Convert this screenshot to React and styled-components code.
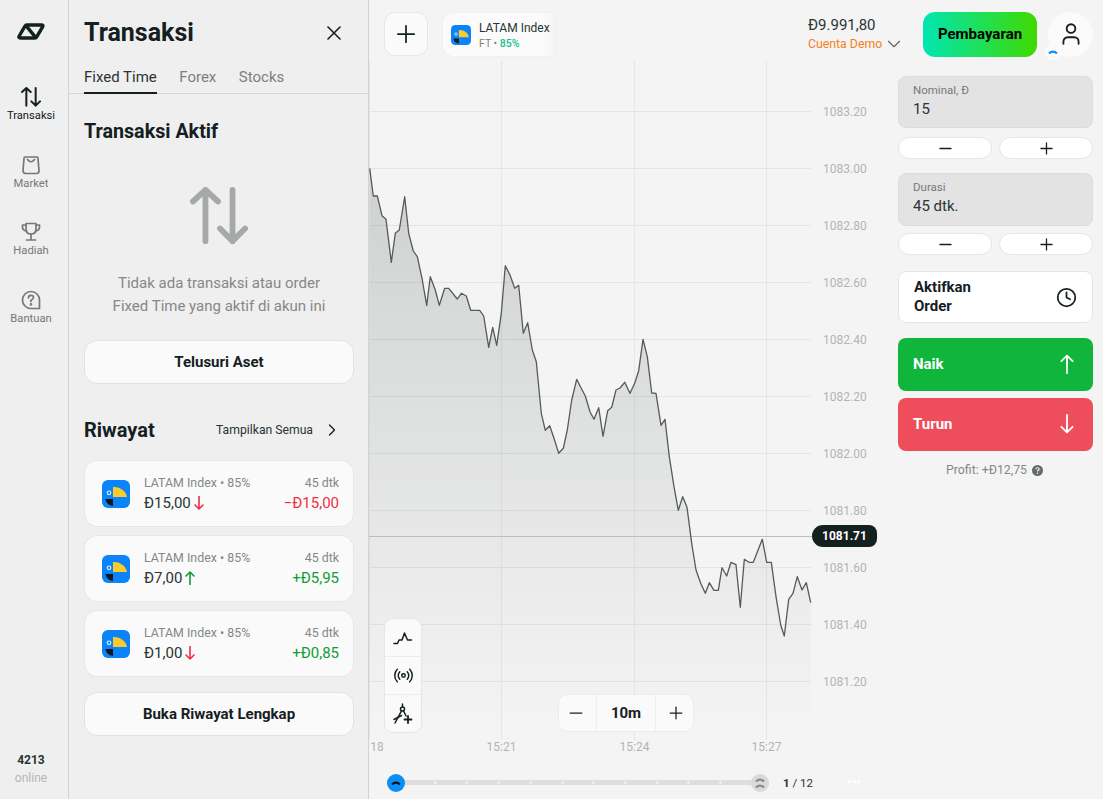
import React from "react";
import styled, { createGlobalStyle } from "styled-components";
import { ChevronDown, ChevronRight, Clock, Minus, Plus, Radio, User, X } from "lucide-react";

const INK = "#14201f";

const GlobalStyle = createGlobalStyle`
	* {
		box-sizing: border-box;
	}
	html,
	body {
		margin: 0;
		height: 100%;
		background: #f4f4f4;
		font-family: Roboto, "Liberation Sans", sans-serif;
		color: ${INK};
		overflow: hidden;
	}
`;

const Page = styled.div`
	display: flex;
	width: 1103px;
	height: 799px;
	overflow: hidden;
`;

// rail kiri
const Rail = styled.nav`
	display: flex;
	flex-direction: column;
	width: 69px;
	flex: none;
	padding-right: 6px;
	background: #efefef;
	border-right: 1px solid #d2d2d2;
`;

const LogoBox = styled.div`
	display: flex;
	justify-content: center;
	height: 86px;
	padding-top: 23px;
`;

const RailItem = styled.div`
	display: flex;
	flex-direction: column;
	align-items: center;
	height: 67.7px;
	color: ${(props) => (props.$active ? INK : "#757878")};
`;

const RailIcon = styled.div`
	display: flex;
	align-items: center;
	justify-content: center;
	height: 22px;
`;

const RailLabel = styled.span`
	margin-top: 1px;
	font-size: 11.2px;
	line-height: 13px;
`;

const RailFooter = styled.div`
	display: flex;
	flex-direction: column;
	align-items: center;
	margin-top: auto;
	padding-bottom: 12px;
`;

const OnlineCount = styled.span`
	font-size: 12px;
	font-weight: 700;
	line-height: 18px;
	color: #2a3434;
`;

const OnlineLabel = styled.span`
	font-size: 12px;
	line-height: 18px;
	color: #b4b6b6;
`;

// panel transaksi
const Panel = styled.aside`
	width: 300px;
	flex: none;
	background: #efefef;
	border-right: 1px solid #d2d2d2;
`;

const PanelHeader = styled.header`
	display: flex;
	align-items: center;
	justify-content: space-between;
	height: 62px;
	padding: 3px 22px 0 15px;
`;

const PanelTitle = styled.h1`
	margin: 0;
	font-size: 25px;
	font-weight: 700;
	line-height: 32px;
`;

const Tabs = styled.div`
	display: flex;
	gap: 22.5px;
	height: 32px;
	padding: 0 15px;
	border-bottom: 1px solid #d5d6d6;
`;

const Tab = styled.div`
	height: 32px;
	font-size: 15px;
	line-height: 30px;
	color: ${(props) => (props.$active ? "#2a3434" : "#7c7f7f")};
	border-bottom: 2px solid ${(props) => (props.$active ? INK : "transparent")};
`;

const PanelBody = styled.div`
	display: flex;
	flex-direction: column;
	padding: 0 14px 0 15px;
`;

const SectionTitle = styled.h2`
	margin: 26px 0 0;
	font-size: 19.7px;
	font-weight: 700;
	line-height: 24px;
`;

const EmptyIcon = styled.div`
	display: flex;
	justify-content: center;
	margin-top: 43px;
	color: #a6a9a9;
`;

const EmptyText = styled.p`
	margin: 27px 0 0;
	font-size: 15px;
	line-height: 23px;
	text-align: center;
	color: #858888;
`;

const WideButton = styled.button`
	height: 44px;
	margin-top: ${(props) => props.$top}px;
	padding: 0;
	border: 1px solid #e3e3e3;
	border-radius: 13px;
	background: #fafafa;
	font-family: inherit;
	font-size: 15px;
	font-weight: 700;
	color: ${INK};
`;

const HistoryHead = styled.div`
	display: flex;
	align-items: center;
	justify-content: space-between;
	height: 30px;
	margin-top: 31px;
`;

const HistoryTitle = styled.h2`
	margin: 0;
	font-size: 20px;
	font-weight: 700;
`;

const ShowAll = styled.div`
	display: flex;
	align-items: center;
	gap: 9px;
	padding-right: 12px;
	font-size: 12.2px;
	color: #2a3434;
`;

const HistoryList = styled.div`
	display: flex;
	flex-direction: column;
	gap: 8px;
	margin-top: 15px;
`;

const HistoryCard = styled.div`
	display: flex;
	align-items: center;
	height: 67px;
	padding: 0 14px 0 17px;
	border: 1px solid #e6e6e6;
	border-radius: 13px;
	background: #fafafa;
`;

const CardInfo = styled.div`
	display: flex;
	flex-direction: column;
	flex: 1;
	gap: 1px;
	margin-left: 14px;
`;

const CardRow = styled.div`
	display: flex;
	align-items: center;
	justify-content: space-between;
`;

const CardMuted = styled.span`
	font-size: 12.4px;
	line-height: 18px;
	color: #858888;
`;

const CardAmount = styled.span`
	display: flex;
	align-items: center;
	gap: 3px;
	font-size: 15px;
	line-height: 20px;
	color: #2a3434;
`;

const CardResult = styled.span`
	font-size: 15px;
	line-height: 20px;
	color: ${(props) => (props.$win ? "#0f9d34" : "#ee2f45")};
`;

// area utama
const Main = styled.main`
	display: flex;
	flex-direction: column;
	flex: 1;
	min-width: 0;
`;

const TopBar = styled.header`
	display: flex;
	align-items: center;
	height: 61px;
	padding: 7px 10px 0 15px;
	flex: none;
`;

const AddButton = styled.div`
	display: flex;
	align-items: center;
	justify-content: center;
	width: 44px;
	height: 44px;
	border: 1px solid #e6e6e6;
	border-radius: 11px;
	background: #fafafa;
`;

const AssetTab = styled.div`
	display: flex;
	align-items: center;
	gap: 8px;
	width: 112px;
	height: 43px;
	margin-left: 15px;
	padding: 2px 0 0 8px;
	border-radius: 10px 0 0 10px;
	overflow: hidden;
	white-space: nowrap;
	background: linear-gradient(90deg, #fbfbfb 88%, #f4f4f4 100%);
	box-shadow: 0 0 2px #e8e8e8;
`;

const AssetText = styled.div`
	display: flex;
	flex-direction: column;
`;

const AssetName = styled.span`
	font-size: 12px;
	line-height: 17px;
	color: #2a3434;
`;

const AssetMeta = styled.span`
	font-size: 10.5px;
	line-height: 14px;
	color: #7c7f7f;

	b {
		font-weight: 500;
		color: #17bf8d;
	}
`;

const Balance = styled.div`
	display: flex;
	flex-direction: column;
	width: 115px;
	margin-left: auto;
`;

const BalanceValue = styled.span`
	font-size: 15px;
	line-height: 19px;
	color: #2a3434;
`;

const AccountRow = styled.span`
	display: flex;
	align-items: center;
	gap: 1px;
	height: 17px;
	margin-top: 1px;
	font-size: 12.3px;
	line-height: 17px;
	color: #f4801c;

	svg {
		color: #5c6363;
	}
`;

const PayButton = styled.button`
	width: 114px;
	height: 45px;
	padding: 0;
	border: 0;
	border-radius: 12px;
	background: linear-gradient(90deg, #00e6b2, #3fd900);
	font-family: inherit;
	font-size: 15px;
	font-weight: 700;
	color: #000;
`;

const Avatar = styled.div`
	position: relative;
	display: flex;
	align-items: center;
	justify-content: center;
	width: 45px;
	height: 45px;
	margin-left: 11px;
	border-radius: 50%;
	background: #fbfbfb;
`;

const AvatarBadge = styled.div`
	position: absolute;
	left: -3px;
	bottom: -3px;
	display: flex;
	align-items: center;
	justify-content: center;
	width: 16px;
	height: 16px;
	border-radius: 50%;
	background: #fbfbfb;
`;

const Content = styled.div`
	display: flex;
	flex: 1;
	min-height: 0;
`;

const ChartColumn = styled.section`
	position: relative;
	display: flex;
	flex-direction: column;
	width: 529px;
	flex: none;
`;

const ChartSvg = styled.svg`
	display: block;
	flex: none;
`;

const AxisText = styled.text`
	font-family: Roboto, "Liberation Sans", sans-serif;
	font-size: 12px;
	fill: #b2b4b4;
`;

const PriceTag = styled.div`
	position: absolute;
	top: 464px;
	left: 443px;
	width: 65px;
	height: 22px;
	border-radius: 11px 8px 8px 11px;
	background: ${INK};
	font-size: 12px;
	font-weight: 700;
	line-height: 22px;
	text-align: center;
	color: #fff;
`;

const ToolStack = styled.div`
	position: absolute;
	top: 557px;
	left: 15px;
	display: flex;
	flex-direction: column;
	width: 38px;
	height: 115px;
	border: 1px solid #e6e6e6;
	border-radius: 9px;
	background: #fafafa;
`;

const ToolCell = styled.div`
	display: flex;
	align-items: center;
	justify-content: center;
	flex: 1;

	& + & {
		border-top: 1px solid #ececec;
	}
`;

const ZoomControl = styled.div`
	position: absolute;
	top: 633px;
	left: 189px;
	display: flex;
	width: 136px;
	height: 38px;
	border: 1px solid #ececec;
	border-radius: 9px;
	background: #fafafa;
`;

const ZoomButton = styled.div`
	display: flex;
	align-items: center;
	justify-content: ${(props) => (props.$end ? "flex-end" : "flex-start")};
	width: 37px;
	padding: 0 7px;
`;

const ZoomValue = styled.div`
	flex: 1;
	border-left: 1px solid #f0f0f0;
	border-right: 1px solid #f0f0f0;
	font-size: 15px;
	font-weight: 700;
	line-height: 36px;
	text-align: center;
`;

const SliderRow = styled.div`
	display: flex;
	align-items: center;
	height: 34px;
	padding-left: 18px;
`;

const SliderTrack = styled.div`
	display: flex;
	align-items: center;
	justify-content: space-between;
	width: 382px;
	background: linear-gradient(#dedede, #dedede) center / 100% 5px no-repeat;
`;

const SliderKnob = styled.div`
	display: flex;
	flex-direction: column;
	align-items: center;
	justify-content: center;
	gap: 1px;
	width: 18px;
	height: 18px;
	border-radius: 50%;
	background: ${(props) => (props.$blue ? "#0a8ff5" : "#d8d9d9")};
`;

const SliderDot = styled.span`
	width: 3px;
	height: 3px;
	border-radius: 50%;
	background: #f0f0f0;
`;

const SliderCount = styled.div`
	width: 65px;
	margin-left: 14px;
	font-size: 11.5px;
	color: #2a3434;

	b {
		font-weight: 700;
	}
`;

const MoreDots = styled.div`
	display: flex;
	gap: 1.5px;
	margin-bottom: 2px;
`;

const MoreDot = styled.span`
	width: 3px;
	height: 3px;
	border-radius: 50%;
	background: #fff;
`;

// kolom order kanan
const Side = styled.section`
	display: flex;
	flex-direction: column;
	width: 195px;
	flex: none;
	padding-top: 15px;
`;

const InputBox = styled.div`
	display: flex;
	flex-direction: column;
	height: ${(props) => props.$height}px;
	padding: 6px 14px 0;
	border: 1px solid #dcdcdc;
	border-radius: 8px;
	background: #e3e3e3;
`;

const InputLabel = styled.span`
	font-size: 11.5px;
	line-height: 14px;
	color: #767979;
`;

const InputValue = styled.span`
	margin-top: 3px;
	font-size: 15px;
	line-height: 19px;
	color: #2a3434;
`;

const StepRow = styled.div`
	display: flex;
	gap: 7px;
	margin: ${(props) => props.$top}px 0 ${(props) => props.$bottom}px;
`;

const StepButton = styled.div`
	display: flex;
	align-items: center;
	justify-content: center;
	flex: 1;
	height: 22px;
	border: 1px solid #e6e6e6;
	border-radius: 11px;
	background: #fff;
`;

const OrderCard = styled.div`
	display: flex;
	align-items: center;
	justify-content: space-between;
	height: 52px;
	padding: 0 15px;
	border: 1px solid #e4e4e4;
	border-radius: 8px;
	background: #fff;
	font-size: 15px;
	font-weight: 700;
	line-height: 19px;
`;

const TradeButton = styled.div`
	display: flex;
	align-items: center;
	justify-content: space-between;
	height: 53px;
	margin-top: ${(props) => props.$top}px;
	padding: 0 19px 2px 15px;
	border-radius: 8px;
	background: ${(props) => (props.$up ? "#10b53c" : "#ee4d5c")};
	font-size: 15px;
	font-weight: 700;
	color: #fff;
`;

const Profit = styled.div`
	display: flex;
	align-items: center;
	justify-content: center;
	gap: 5px;
	margin-top: 11px;
	padding-right: 2px;
	font-size: 12.3px;
	line-height: 16px;
	color: #858888;
`;

function Logo() {
	return (
		<svg width="28" height="17" viewBox="0 0 28 17" fill="none" stroke={INK} strokeWidth="3.4" strokeLinejoin="round" strokeLinecap="round">
			<path d="M8 3.2 Q8.6 2 10 2 H24.5 Q26.6 2 25.6 3.8 L20 13.4 Q19.2 15 17.5 15 H3.4 Q1.2 15 2.2 13 Z" />
			<path d="M9 2.6 L18.6 14.4" />
		</svg>
	);
}

function SwapIcon({ size }) {
	return (
		<svg width={size} height={size} viewBox="0 0 60 60" fill="none" stroke="currentColor" strokeWidth="6" strokeLinecap="round" strokeLinejoin="round">
			<path d="M16 56 V3 M3 15 L16 3 L29 15" />
			<path d="M44 3 V56 M31 43 L44 56 L57 43" />
		</svg>
	);
}

function BagIcon() {
	return (
		<svg width="20" height="20" viewBox="0 0 20 20" fill="none" stroke="currentColor" strokeWidth="1.7" strokeLinecap="round" strokeLinejoin="round">
			<path d="M4 2 H16 Q17 2 17 3.5 L18 15.5 Q18 18.5 15.5 18.5 H4.5 Q2 18.5 2 15.5 L3 3.5 Q3 2 4 2 Z" />
			<path d="M6.5 4.5 Q10 9 13.5 4.5" />
		</svg>
	);
}

function TrophyIcon() {
	return (
		<svg width="20" height="20" viewBox="0 0 20 20" fill="none" stroke="currentColor" strokeWidth="1.7" strokeLinecap="round" strokeLinejoin="round">
			<path d="M5 1.5 H15 V7 Q15 12 10 12 Q5 12 5 7 Z" />
			<path d="M5 3 H1.5 V5 Q1.5 8.5 5.5 9 M15 3 H18.5 V5 Q18.5 8.5 14.5 9" />
			<path d="M10 12 V17 M5.5 18 H14.5" />
		</svg>
	);
}

function HelpIcon() {
	return (
		<svg width="20" height="20" viewBox="0 0 20 20" fill="none" stroke="currentColor" strokeWidth="1.7" strokeLinecap="round" strokeLinejoin="round">
			<path d="M10 1.5 A8.5 8.5 0 1 0 10 18.5 H18.5 V10 A8.5 8.5 0 0 0 10 1.5 Z" />
			<path d="M7.5 7.8 Q7.5 5.4 10 5.4 Q12.5 5.4 12.5 7.6 Q12.5 9 10 10.2 V11.4" />
			<circle cx="10" cy="14.4" r="0.5" />
		</svg>
	);
}

function TukanIcon({ size }) {
	return (
		<svg width={size} height={size} viewBox="0 0 28 28" style={{ flex: "none" }}>
			<rect width="28" height="28" rx="6" fill="#0a84f8" />
			<path d="M11 7 C18 6.5 24 11 25 17 H11 Z" fill="#fbcb2d" />
			<path d="M3.3 19 H11 V26 Q4.5 25 3.3 19 Z" fill="#14181c" />
			<circle cx="7" cy="12.8" r="1.8" fill="none" stroke="#dbeeff" strokeWidth="1.2" />
		</svg>
	);
}

function SmallArrow({ up, color, width = 10, height = 14, stroke = 1.6 }) {
	const path = up ? "M5 13.5 V1 M1 5 L5 1 L9 5" : "M5 0.5 V13 M1 9 L5 13 L9 9";
	return (
		<svg width={width} height={height} viewBox="0 0 10 14" fill="none" stroke={color} strokeWidth={stroke} strokeLinecap="round" strokeLinejoin="round">
			<path d={path} />
		</svg>
	);
}

function LineToolIcon() {
	return (
		<svg width="20" height="16" viewBox="0 0 20 16" fill="none" stroke={INK} strokeWidth="1.5" strokeLinecap="round" strokeLinejoin="round">
			<path d="M1 13.5 H4.5 L6 10 H9 L11.5 3 L14.5 10 H18.5" />
		</svg>
	);
}

function CompassIcon() {
	return (
		<svg width="20" height="22" viewBox="0 0 20 22" fill="none" stroke={INK} strokeWidth="1.5" strokeLinecap="round" strokeLinejoin="round">
			<circle cx="9.5" cy="6" r="2" />
			<path d="M9.5 1 V4 M8.5 7.8 L2 20 M10.5 7.8 L13 13" />
			<path d="M1 16.5 L8.5 12.5" />
			<path d="M15 13 V20 M11.5 16.5 H18.5" strokeWidth="1.8" />
		</svg>
	);
}

function Arc({ color, width = 10 }) {
	return (
		<svg width={width} height="5" viewBox="0 0 10 5" fill="none" stroke={color} strokeWidth="2.2">
			<path d="M1 4.5 Q5 0.5 9 4.5" />
		</svg>
	);
}

// titik grafik, koordinat halaman
const linePoints = [
	[369.7, 168.3], [373.3, 196], [377.3, 196], [382, 215.7], [386, 219.3], [391.3, 262.3], [395.3, 233.3],
	[399.3, 230], [404.7, 196.7], [408.7, 233.3], [413.3, 251], [417.3, 256.7], [422, 278.3], [426.7, 305.3],
	[430.3, 276.7], [435.3, 290], [439.3, 305.3], [444.7, 288.3], [448.7, 288.3], [457.3, 299], [461.3, 293.3],
	[466.3, 296], [470.7, 310.3], [479.7, 310.3], [483.7, 316], [488.7, 347.3], [492.7, 327.3], [496.7, 345.3],
	[501.3, 313.3], [505.3, 265.7], [510, 275], [514.7, 288.3], [518.7, 285.3], [523.3, 333.3], [527.7, 322.7],
	[532.3, 350], [536.3, 361.7], [541.3, 413.3], [545.3, 430.3], [549.7, 425.7], [554, 438.3], [558.7, 453.3],
	[563.3, 448.3], [567.3, 430], [571.7, 400], [576.7, 379.3], [580.7, 387.3], [585.3, 396], [590, 411.7],
	[594, 419.3], [598.7, 407.7], [603, 436.3], [607.7, 410.7], [611.7, 407.3], [616, 390], [620, 388],
	[624.7, 382.3], [630, 393.3], [634.7, 383.3], [638.7, 370.7], [643, 339.3], [647.3, 356.7], [651.7, 393],
	[656, 393.3], [661, 425.3], [665, 419.3], [669.3, 456.7], [674, 486.7], [678.3, 510.3], [682.7, 496.7],
	[687, 507.3], [691.7, 543.3], [696, 570], [700.7, 583.3], [705.3, 593.3], [709.3, 582.7], [714, 590.3],
	[718.3, 590.3], [722, 567.7], [726.7, 576], [731, 562.3], [736, 564.7], [740.3, 607.3], [744.3, 559.3],
	[749, 562.3], [753.3, 562.3], [762.3, 539.3], [766.7, 562.3], [771.3, 562.3], [776, 596.7], [780.7, 625],
	[784.3, 636], [788.7, 599.3], [793, 593.3], [797.3, 576.7], [802, 590], [806.3, 582.7], [810.7, 602.7],
];

const linePath = linePoints.map(([x, y], i) => `${i === 0 ? "M" : "L"}${x} ${y}`).join(" ");
const areaPath = `${linePath} L810.7 740 L369 740 Z`;

const priceLevels = ["1083.20", "1083.00", "1082.80", "1082.60", "1082.40", "1082.20", "1082.00", "1081.80", "1081.60", "1081.40", "1081.20"];
const timeMarks = [
	{ x: 369.5, labelX: 377, label: "18" },
	{ x: 501.5, labelX: 501.5, label: "15:21" },
	{ x: 634.5, labelX: 634.5, label: "15:24" },
	{ x: 766.5, labelX: 766.5, label: "15:27" },
];

function PriceChart() {
	return (
		<ChartSvg width="529" height="705" viewBox="369 61 529 705">
			<defs>
				<linearGradient id="areaFill" x1="0" y1="168" x2="0" y2="730" gradientUnits="userSpaceOnUse">
					<stop offset="0" stopColor="#646a6a" stopOpacity="0.26" />
					<stop offset="1" stopColor="#646a6a" stopOpacity="0" />
				</linearGradient>
			</defs>
			{priceLevels.map((label, i) => (
				<g key={label}>
					<line x1="369" x2="811" y1={111.5 + i * 57} y2={111.5 + i * 57} stroke="#e4e4e4" />
					<AxisText x="823" y={115.5 + i * 57}>
						{label}
					</AxisText>
				</g>
			))}
			{timeMarks.map((mark) => (
				<g key={mark.label}>
					<line x1={mark.x} x2={mark.x} y1="61" y2="740" stroke="#e6e6e6" />
					<AxisText x={mark.labelX} y="751" textAnchor="middle">
						{mark.label}
					</AxisText>
				</g>
			))}
			<path d={areaPath} fill="url(#areaFill)" />
			<line x1="369" x2="813" y1="536.5" y2="536.5" stroke="#bcbebe" />
			<path d={linePath} fill="none" stroke="#565a5a" strokeWidth="1.3" strokeLinejoin="round" />
		</ChartSvg>
	);
}

const history = [
	{ stake: "Đ15,00", up: false, result: "−Đ15,00", win: false },
	{ stake: "Đ7,00", up: true, result: "+Đ5,95", win: true },
	{ stake: "Đ1,00", up: false, result: "+Đ0,85", win: true },
];

export default function App() {
	return (
		<Page>
			<GlobalStyle />
			<Rail>
				<LogoBox>
					<Logo />
				</LogoBox>
				<RailItem $active>
					<RailIcon>
						<SwapIcon size={20} />
					</RailIcon>
					<RailLabel>Transaksi</RailLabel>
				</RailItem>
				<RailItem>
					<RailIcon>
						<BagIcon />
					</RailIcon>
					<RailLabel>Market</RailLabel>
				</RailItem>
				<RailItem>
					<RailIcon>
						<TrophyIcon />
					</RailIcon>
					<RailLabel>Hadiah</RailLabel>
				</RailItem>
				<RailItem>
					<RailIcon>
						<HelpIcon />
					</RailIcon>
					<RailLabel>Bantuan</RailLabel>
				</RailItem>
				<RailFooter>
					<OnlineCount>4213</OnlineCount>
					<OnlineLabel>online</OnlineLabel>
				</RailFooter>
			</Rail>

			<Panel>
				<PanelHeader>
					<PanelTitle>Transaksi</PanelTitle>
					<X size={24} strokeWidth={1.6} color={INK} />
				</PanelHeader>
				<Tabs>
					<Tab $active>Fixed Time</Tab>
					<Tab>Forex</Tab>
					<Tab>Stocks</Tab>
				</Tabs>
				<PanelBody>
					<SectionTitle>Transaksi Aktif</SectionTitle>
					<EmptyIcon>
						<SwapIcon size={58} />
					</EmptyIcon>
					<EmptyText>
						Tidak ada transaksi atau order
						<br />
						Fixed Time yang aktif di akun ini
					</EmptyText>
					<WideButton $top={22}>Telusuri Aset</WideButton>
					<HistoryHead>
						<HistoryTitle>Riwayat</HistoryTitle>
						<ShowAll>
							Tampilkan Semua
							<ChevronRight size={20} strokeWidth={1.6} color={INK} />
						</ShowAll>
					</HistoryHead>
					<HistoryList>
						{history.map((item) => (
							<HistoryCard key={item.stake}>
								<TukanIcon size={28} />
								<CardInfo>
									<CardRow>
										<CardMuted>LATAM Index • 85%</CardMuted>
										<CardMuted>45 dtk</CardMuted>
									</CardRow>
									<CardRow>
										<CardAmount>
											{item.stake}
											<SmallArrow up={item.up} color={item.up ? "#0f9d34" : "#ee2f45"} />
										</CardAmount>
										<CardResult $win={item.win}>{item.result}</CardResult>
									</CardRow>
								</CardInfo>
							</HistoryCard>
						))}
					</HistoryList>
					<WideButton $top={15}>Buka Riwayat Lengkap</WideButton>
				</PanelBody>
			</Panel>

			<Main>
				<TopBar>
					<AddButton>
						<Plus size={28} strokeWidth={1.5} color={INK} />
					</AddButton>
					<AssetTab>
						<TukanIcon size={20} />
						<AssetText>
							<AssetName>LATAM Index</AssetName>
							<AssetMeta>
								FT • <b>85%</b>
							</AssetMeta>
						</AssetText>
					</AssetTab>
					<Balance>
						<BalanceValue>Đ9.991,80</BalanceValue>
						<AccountRow>
							Cuenta Demo
							<ChevronDown size={22} strokeWidth={1.2} />
						</AccountRow>
					</Balance>
					<PayButton>Pembayaran</PayButton>
					<Avatar>
						<User size={26} strokeWidth={1.7} color={INK} />
						<AvatarBadge>
							<Arc color="#0a8ff5" />
						</AvatarBadge>
					</Avatar>
				</TopBar>

				<Content>
					<ChartColumn>
						<PriceChart />
						<PriceTag>1081.71</PriceTag>
						<ToolStack>
							<ToolCell>
								<LineToolIcon />
							</ToolCell>
							<ToolCell>
								<Radio size={21} strokeWidth={1.7} color={INK} />
							</ToolCell>
							<ToolCell>
								<CompassIcon />
							</ToolCell>
						</ToolStack>
						<ZoomControl>
							<ZoomButton>
								<Minus size={20} strokeWidth={1.5} color={INK} />
							</ZoomButton>
							<ZoomValue>10m</ZoomValue>
							<ZoomButton $end>
								<Plus size={20} strokeWidth={1.5} color={INK} />
							</ZoomButton>
						</ZoomControl>
						<SliderRow>
							<SliderTrack>
								<SliderKnob $blue>
									<Arc color="#111" />
								</SliderKnob>
								{Array.from({ length: 10 }, (_, i) => (
									<SliderDot key={i} />
								))}
								<SliderKnob>
									<Arc color="#8a8c8c" />
									<Arc color="#8a8c8c" />
								</SliderKnob>
							</SliderTrack>
							<SliderCount>
								<b>1</b> / 12
							</SliderCount>
							<MoreDots>
								<MoreDot />
								<MoreDot />
								<MoreDot />
							</MoreDots>
						</SliderRow>
					</ChartColumn>

					<Side>
						<InputBox $height={52}>
							<InputLabel>Nominal, Đ</InputLabel>
							<InputValue>15</InputValue>
						</InputBox>
						<StepRow $top={9} $bottom={14}>
							<StepButton>
								<Minus size={19} strokeWidth={1.6} color={INK} />
							</StepButton>
							<StepButton>
								<Plus size={19} strokeWidth={1.6} color={INK} />
							</StepButton>
						</StepRow>
						<InputBox $height={53}>
							<InputLabel>Durasi</InputLabel>
							<InputValue>45 dtk.</InputValue>
						</InputBox>
						<StepRow $top={7} $bottom={16}>
							<StepButton>
								<Minus size={19} strokeWidth={1.6} color={INK} />
							</StepButton>
							<StepButton>
								<Plus size={19} strokeWidth={1.6} color={INK} />
							</StepButton>
						</StepRow>
						<OrderCard>
							<span>
								Aktifkan
								<br />
								Order
							</span>
							<Clock size={21} strokeWidth={2} color={INK} />
						</OrderCard>
						<TradeButton $up $top={15}>
							Naik
							<SmallArrow up color="#fff" width={14} height={20} stroke={1.3} />
						</TradeButton>
						<TradeButton $top={7}>
							Turun
							<SmallArrow color="#fff" width={14} height={20} stroke={1.3} />
						</TradeButton>
						<Profit>
							Profit: +Đ12,75
							<svg width="11" height="11" viewBox="0 0 12 12">
								<circle cx="6" cy="6" r="6" fill="#666a6a" />
								<path d="M4.2 4.6 Q4.3 3 6 3 Q7.8 3 7.8 4.5 Q7.8 5.4 6 6.3 V7" fill="none" stroke="#f4f4f4" strokeWidth="1.3" />
								<circle cx="6" cy="9" r="0.8" fill="#f4f4f4" />
							</svg>
						</Profit>
					</Side>
				</Content>
			</Main>
		</Page>
	);
}
